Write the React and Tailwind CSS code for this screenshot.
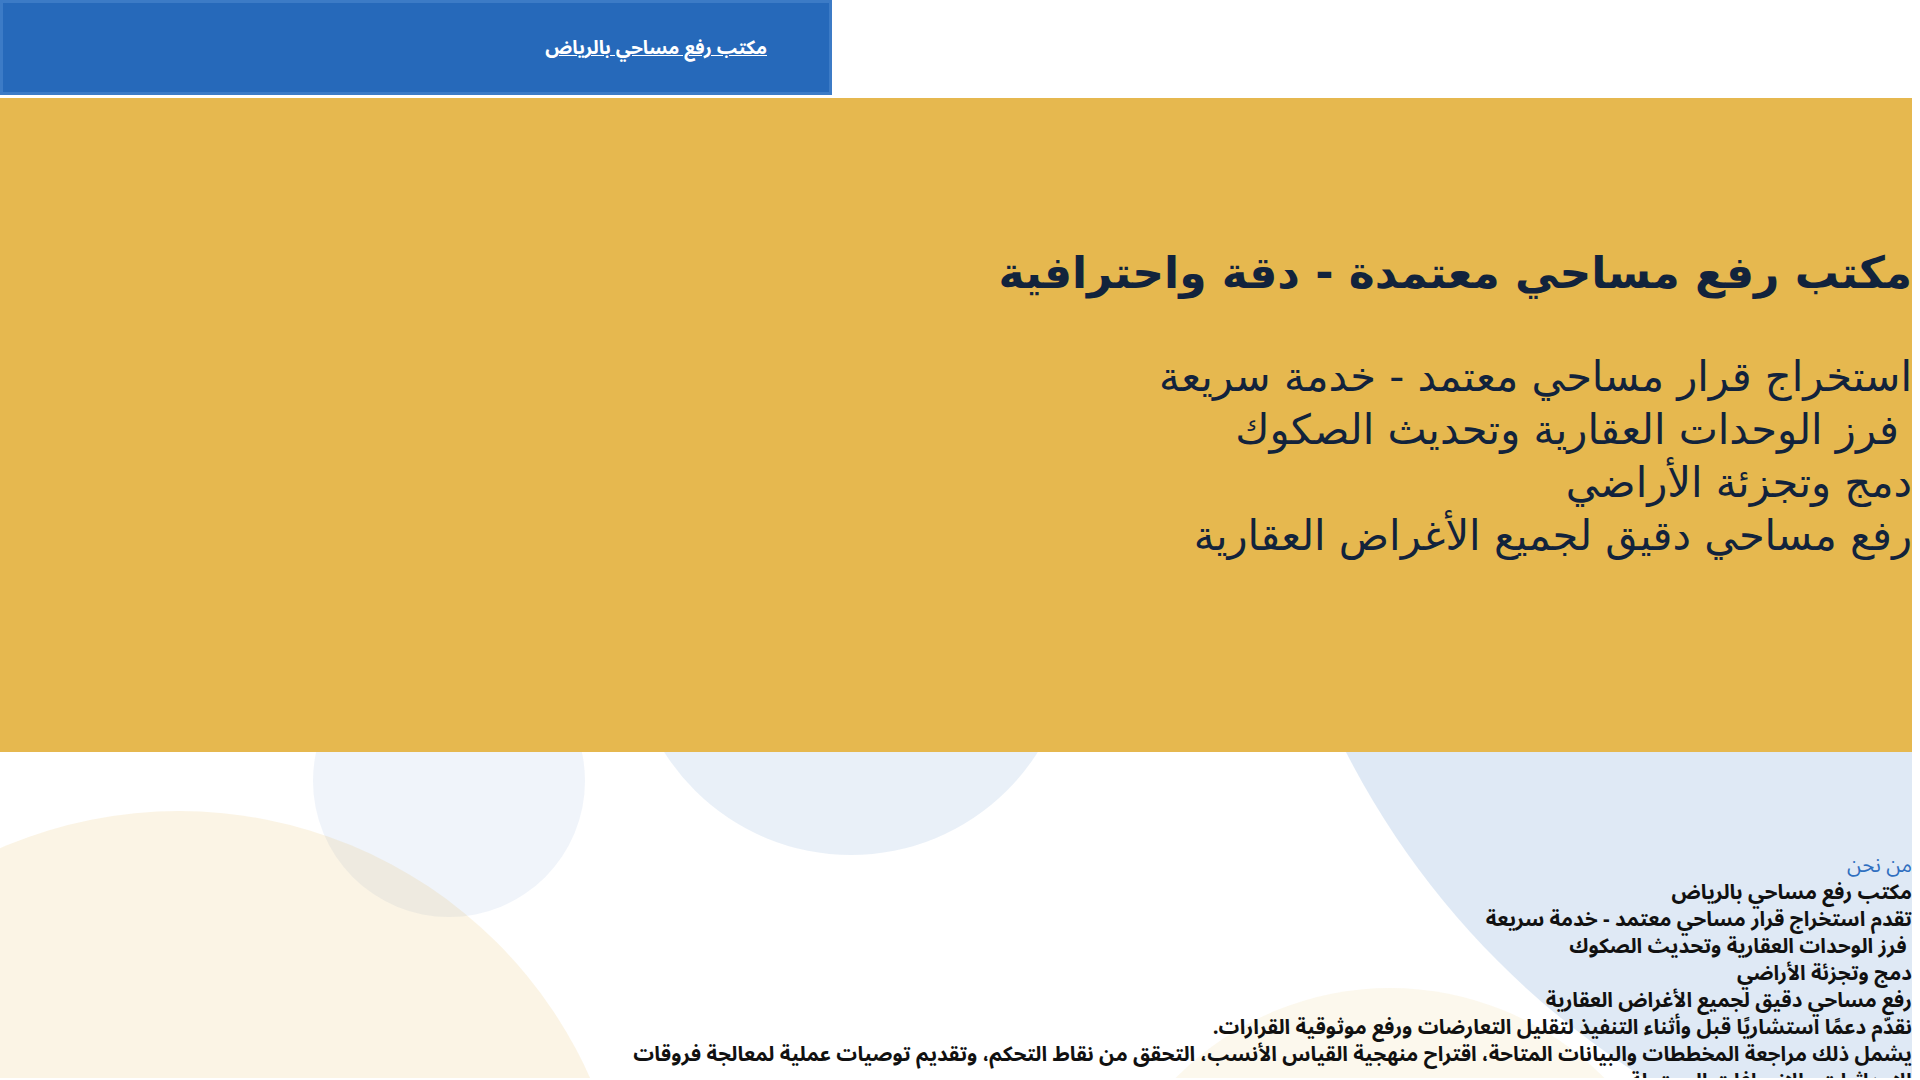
const services = [
  'استخراج قرار مساحي معتمد - خدمة سريعة',
  ' فرز الوحدات العقارية وتحديث الصكوك',
  'دمج وتجزئة الأراضي',
  'رفع مساحي دقيق لجميع الأغراض العقارية',
]

const about = [
  'تقدم استخراج قرار مساحي معتمد - خدمة سريعة',
  ' فرز الوحدات العقارية وتحديث الصكوك',
  'دمج وتجزئة الأراضي',
  'رفع مساحي دقيق لجميع الأغراض العقارية',
  'نقدّم دعمًا استشاريًا قبل وأثناء التنفيذ لتقليل التعارضات ورفع موثوقية القرارات.',
]

const App = () => {
  return (
    <div className="w-[1912px] min-h-screen bg-white overflow-hidden flex flex-col gap-[3px] font-['DejaVu_Sans',sans-serif]">
      <header className="w-[832px] h-[95px] bg-[#2669ba] border-[3px] border-[#3c7bc6] flex items-center justify-end pr-[62px]">
        <a href="#" dir="rtl" className="text-white underline font-bold text-[19px] pt-[2px] font-['Noto_Sans_Arabic','DejaVu_Sans',sans-serif]">
          مكتب رفع مساحي بالرياض
        </a>
      </header>

      <section dir="rtl" className="bg-[#e6b84f] text-[#12233c] pt-[146px] pb-[190px] flex flex-col">
        <h1 className="text-[44px] leading-[58px] font-bold mb-[48px]">مكتب رفع مساحي معتمدة - دقة واحترافية</h1>
        {services.map((s, i) => (
          <p key={i} className="text-[41.6px] leading-[53px] whitespace-pre">
            {s}
          </p>
        ))}
      </section>

      <section className="relative h-[326px] -mt-[3px] overflow-hidden">
        <div className="absolute left-[1255px] top-[-1209px] w-[1662px] h-[1662px] rounded-full bg-[#2669ba]/15"></div>
        <div className="absolute left-[630px] top-[-339px] w-[442px] h-[442px] rounded-full bg-[#2669ba]/10"></div>
        <div className="absolute left-[313px] top-[-107px] w-[272px] h-[272px] rounded-full bg-[#2669ba]/[0.07]"></div>
        <div className="absolute left-[-271px] top-[59px] w-[900px] h-[900px] rounded-full bg-[#e6b84f]/15"></div>
        <div className="absolute left-[1090px] top-[236px] w-[600px] h-[600px] rounded-full bg-[#e6b84f]/10"></div>

        <div dir="rtl" className="relative pt-[100px] font-['Noto_Sans_Arabic','DejaVu_Sans',sans-serif]">
          <div className="max-w-[1290px] flex flex-col text-[20.6px] leading-[27px]">
            <p className="text-[#2f6fc0]">من نحن</p>
            <h2 className="font-bold text-[#111]">مكتب رفع مساحي بالرياض</h2>
            {about.map((s, i) => (
              <p key={i} className="font-bold text-[#111] whitespace-pre-wrap">
                {s}
              </p>
            ))}
            <p className="font-bold text-[#111]">
              يشمل ذلك مراجعة المخططات والبيانات المتاحة، اقتراح منهجية القياس الأنسب، التحقق من نقاط التحكم، وتقديم توصيات عملية لمعالجة فروقات الإحداثيات والانحرافات المحتملة.
            </p>
          </div>
        </div>
      </section>
    </div>
  )
}

export default App
